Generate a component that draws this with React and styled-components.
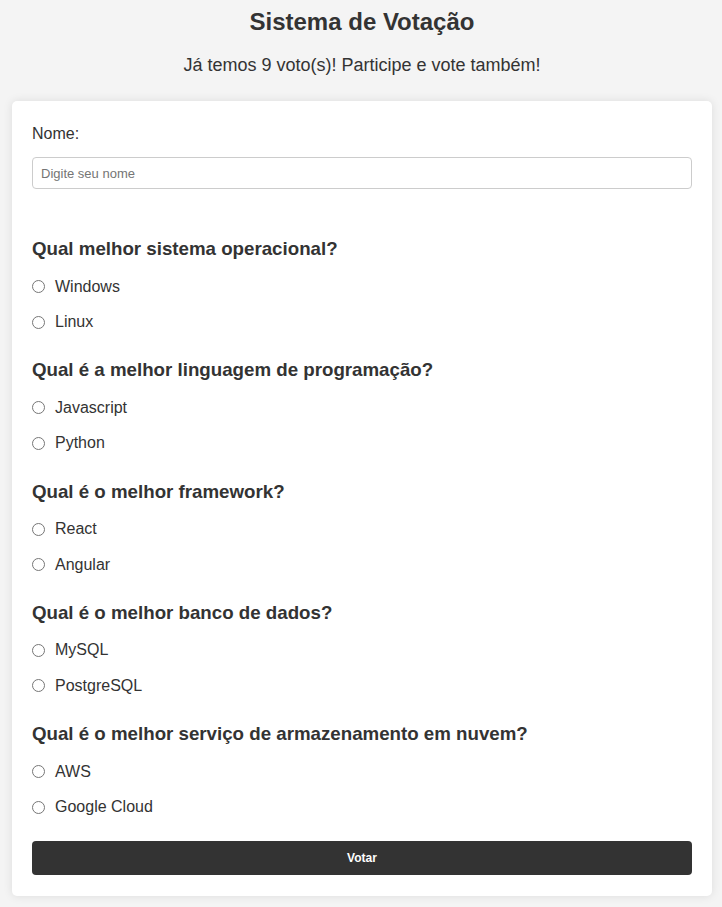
import React from 'react';
import styled, { createGlobalStyle } from 'styled-components';

const GlobalStyle = createGlobalStyle`
  body {
    margin: 0;
    background: #f4f4f4;
    font-family: 'Liberation Sans', Arial, sans-serif;
    color: #333;
  }
`;

const Page = styled.div`
  padding: 8px 10px 11px 12px;
`;

const Title = styled.h1`
  margin: 0;
  text-align: center;
  font-size: 24px;
  line-height: 28px;
  font-weight: bold;
`;

const Subtitle = styled.p`
  margin: 18px 0 25px;
  text-align: center;
  font-size: 18px;
  line-height: 22px;
`;

const Card = styled.form`
  background: #fff;
  border-radius: 5px;
  box-shadow: 0 0 10px rgba(0, 0, 0, 0.1);
  padding: 20px 20px 21px;
`;

const Label = styled.label`
  display: block;
  font-size: 16px;
  line-height: 26px;
  margin-bottom: 10px;
`;

const TextInput = styled.input`
  display: block;
  box-sizing: border-box;
  width: 100%;
  height: 32px;
  padding: 0 8px;
  border: 1px solid #ccc;
  border-radius: 4px;
  font-family: 'Liberation Sans', Arial, sans-serif;
  font-size: 13px;
  color: #333;
  margin-bottom: 49px;
  &::placeholder {
    color: #757575;
  }
`;

const Section = styled.div`
  margin-bottom: 19.5px;
  &:last-of-type {
    margin-bottom: 16px;
  }
`;

const Question = styled.h3`
  margin: 0 0 8.75px;
  font-size: 18.72px;
  line-height: 22px;
  font-weight: bold;
`;

const Option = styled.label`
  display: flex;
  align-items: center;
  height: 35.5px;
  font-size: 16px;
  cursor: pointer;
`;

const Radio = styled.input`
  width: 13px;
  height: 13px;
  margin: 0 10px 0 0;
`;

const Button = styled.button`
  display: block;
  width: 100%;
  height: 34px;
  border: none;
  border-radius: 4px;
  background: #333;
  color: #fff;
  font-family: 'Liberation Sans', Arial, sans-serif;
  font-size: 12px;
  font-weight: bold;
  cursor: pointer;
`;

const questions = [
  { id: 'so', title: 'Qual melhor sistema operacional?', options: ['Windows', 'Linux'] },
  { id: 'lang', title: 'Qual é a melhor linguagem de programação?', options: ['Javascript', 'Python'] },
  { id: 'fw', title: 'Qual é o melhor framework?', options: ['React', 'Angular'] },
  { id: 'db', title: 'Qual é o melhor banco de dados?', options: ['MySQL', 'PostgreSQL'] },
  { id: 'cloud', title: 'Qual é o melhor serviço de armazenamento em nuvem?', options: ['AWS', 'Google Cloud'] },
];

export default function App() {
  return (
    <Page>
      <GlobalStyle />
      <Title>Sistema de Votação</Title>
      <Subtitle>Já temos 9 voto(s)! Participe e vote também!</Subtitle>
      <Card onSubmit={(e) => e.preventDefault()}>
        <Label htmlFor="nome">Nome:</Label>
        <TextInput id="nome" type="text" placeholder="Digite seu nome" />
        {questions.map((q) => (
          <Section key={q.id}>
            <Question>{q.title}</Question>
            {q.options.map((opt) => (
              <Option key={opt}>
                <Radio type="radio" name={q.id} value={opt} />
                {opt}
              </Option>
            ))}
          </Section>
        ))}
        <Button type="submit">Votar</Button>
      </Card>
    </Page>
  );
}
